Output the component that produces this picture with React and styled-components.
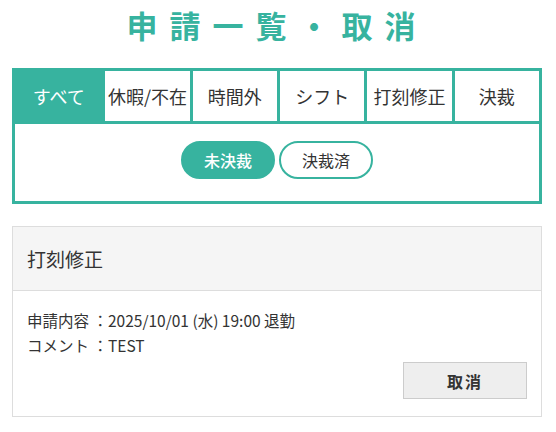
import React, { useState } from 'react';
import styled, { createGlobalStyle } from 'styled-components';

const teal = '#37b39f';

const GlobalStyle = createGlobalStyle`
  body {
    margin: 0;
    background: #fff;
    font-family: "Noto Sans CJK JP", "Noto Sans", sans-serif;
    color: #333;
  }
`;

const Page = styled.div`
  width: 530px;
  padding: 0 14px 0 12px;
`;

const Title = styled.h1`
  margin: 0;
  padding-top: 2px;
  height: 66px;
  text-align: center;
  font-size: 31px;
  font-weight: 700;
  letter-spacing: 12px;
  color: ${teal};
  line-height: 46px;
`;

const FilterBox = styled.div`
  border: 3px solid ${teal};
`;

const TabRow = styled.div`
  display: grid;
  grid-template-columns: repeat(6, 1fr);
  border-bottom: 3px solid ${teal};
`;

const Tab = styled.button`
  height: 50px;
  border: none;
  border-left: ${p => (p.$first ? 'none' : `3px solid ${teal}`)};
  background: ${p => (p.$active ? teal : '#fff')};
  color: ${p => (p.$active ? '#fff' : '#333')};
  font-family: inherit;
  font-size: 18px;
  padding: 0;
  white-space: nowrap;
  cursor: pointer;
`;

const StatusRow = styled.div`
  display: flex;
  justify-content: center;
  gap: 4px;
  padding: 17px 0 22px;
`;

const Pill = styled.button`
  width: 94px;
  height: 38px;
  border-radius: 19px;
  border: 2px solid ${teal};
  background: ${p => (p.$active ? teal : '#fff')};
  color: ${p => (p.$active ? '#fff' : '#333')};
  font-family: inherit;
  font-size: 16px;
  font-weight: ${p => (p.$active ? 500 : 400)};
  padding: 0;
  cursor: pointer;
`;

const Card = styled.div`
  margin-top: 22px;
  border: 1px solid #ddd;
`;

const CardHeader = styled.div`
  background: #f5f5f5;
  border-bottom: 1px solid #ddd;
  height: 63px;
  display: flex;
  align-items: center;
  padding-left: 14px;
  font-size: 19px;
  color: #333;
`;

const CardBody = styled.div`
  padding: 17px 14px 17px;
  font-size: 15.5px;
  line-height: 25px;
  color: #333;
`;

const Actions = styled.div`
  display: flex;
  justify-content: flex-end;
  margin-top: 4px;
`;

const CancelButton = styled.button`
  width: 124px;
  height: 37px;
  background: #eee;
  border: 1px solid #ccc;
  font-family: inherit;
  font-size: 16px;
  font-weight: 700;
  letter-spacing: 2px;
  color: #333;
  cursor: pointer;
`;

const tabs = ['すべて', '休暇/不在', '時間外', 'シフト', '打刻修正', '決裁'];

export default function App() {
  const [tab, setTab] = useState(0);
  const [status, setStatus] = useState(0);
  return (
    <Page>
      <GlobalStyle />
      <Title>申請一覧・取消</Title>
      <FilterBox>
        <TabRow>
          {tabs.map((t, i) => (
            <Tab key={t} $first={i === 0} $active={tab === i} onClick={() => setTab(i)}>
              {t}
            </Tab>
          ))}
        </TabRow>
        <StatusRow>
          <Pill $active={status === 0} onClick={() => setStatus(0)}>未決裁</Pill>
          <Pill $active={status === 1} onClick={() => setStatus(1)}>決裁済</Pill>
        </StatusRow>
      </FilterBox>
      <Card>
        <CardHeader>打刻修正</CardHeader>
        <CardBody>
          <div>申請内容 ：2025/10/01 (水) 19:00 退勤</div>
          <div>コメント ：TEST</div>
          <Actions>
            <CancelButton>取消</CancelButton>
          </Actions>
        </CardBody>
      </Card>
    </Page>
  );
}
